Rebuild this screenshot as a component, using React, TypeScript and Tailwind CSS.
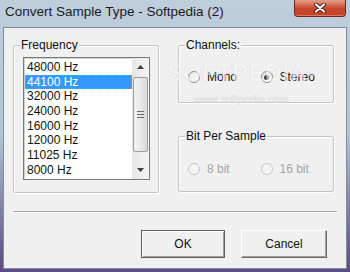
import type { ReactNode } from "react";

const rates = ["48000 Hz", "44100 Hz", "32000 Hz", "24000 Hz", "16000 Hz", "12000 Hz", "11025 Hz", "8000 Hz"];

function Group({ label, className, children }: { label: string; className: string; children?: ReactNode }) {
  return (
    <div
      className={`relative rounded-[2px] border border-[#c4c4c4] shadow-[inset_1px_1px_0_#fff,1px_1px_0_#fff] ${className}`}
    >
      <span className="absolute -top-[8px] left-[6px] bg-[#f0f0f0] px-[1px] text-[12px] leading-[14px] text-[#111]">
        {label}
      </span>
      {children}
    </div>
  );
}

function Radio({ label, checked, disabled, width }: { label: string; checked?: boolean; disabled?: boolean; width: string }) {
  return (
    <div className={`flex items-center gap-[7px] ${width}`}>
      <span
        className={`flex h-[12px] w-[12px] items-center justify-center rounded-full border ${
          disabled
            ? "border-[#c6c6c6] bg-[#f4f4f4]"
            : "border-[#8e8f8f] bg-gradient-to-br from-[#dcdcdc] via-[#f7f7f7] to-white"
        }`}
      >
        {checked && <span className="h-[5px] w-[5px] rounded-full bg-gradient-to-br from-[#555] to-[#0d0d0d]" />}
      </span>
      <span className={`text-[12px] leading-[14px] ${disabled ? "text-[#a5a5a5]" : "text-[#111]"}`}>{label}</span>
    </div>
  );
}

function Arrow({ up }: { up?: boolean }) {
  return (
    <svg width="7" height="4" viewBox="0 0 7 4">
      <path d={up ? "M3.5 0 L7 4 L0 4 Z" : "M0 0 L7 0 L3.5 4 Z"} fill="#3c3c3c" />
    </svg>
  );
}

function ListBox() {
  return (
    <div className="ml-[9px] mt-[11px] flex h-[123px] w-[127px] border border-[#7a7a7a] bg-white shadow-[inset_1px_1px_0_#d0d0d0]">
      <div className="flex-1 pl-[1px] pt-[2px]">
        {rates.map((r, i) => (
          <div
            key={r}
            className={`h-[14.7px] pl-[2px] text-[12px] leading-[14.7px] ${
              i === 1 ? "bg-[#3399ff] text-white outline-1 -outline-offset-1 outline-dotted outline-[#d4873d]" : "text-[#111]"
            }`}
          >
            {r}
          </div>
        ))}
      </div>
      <div className="flex w-[17px] flex-col bg-gradient-to-r from-[#e6e6e6] to-[#f4f4f4]">
        <div className="flex h-[17px] items-center justify-center">
          <Arrow up />
        </div>
        <div className="mx-auto mt-[2px] flex h-[75px] w-[15px] flex-col items-center justify-center gap-[2px] rounded-[2px] border border-[#9d9d9d] bg-gradient-to-r from-[#f3f3f3] via-[#e9e9e9] to-[#d8d8d8]">
          <span className="h-px w-[7px] bg-[#6b6b6b]" />
          <span className="h-px w-[7px] bg-[#6b6b6b]" />
          <span className="h-px w-[7px] bg-[#6b6b6b]" />
        </div>
        <div className="flex flex-1 items-end justify-center pb-[7px]">
          <Arrow />
        </div>
      </div>
    </div>
  );
}

export default function App() {
  return (
    <div className="relative flex h-[272px] w-[350px] flex-col overflow-hidden bg-gradient-to-b from-[#bfcedd] via-[#b2c3d4] to-[#5c4a80] font-['Liberation_Sans',Arial,sans-serif]">
      <div className="flex h-[27px] items-start justify-between">
        <span className="mt-[4px] pl-[5px] text-[13.5px] leading-[16px] text-[#1b1b1b]">
          Convert Sample Type - Softpedia (2)
        </span>
        <button className="mr-[4px] flex h-[17px] w-[52px] items-center justify-center rounded-b-[4px] border border-t-0 border-[#6a2a20] bg-gradient-to-b from-[#e3a08c] via-[#c9472f] to-[#c2432a] shadow-[inset_0_-1px_0_#e07a5c]">
          <svg width="12" height="10" viewBox="0 0 12 10">
            <path d="M2 1.5 L10 8.5 M10 1.5 L2 8.5" stroke="#3b1a14" strokeWidth="4" strokeLinecap="round" />
            <path d="M2 1.5 L10 8.5 M10 1.5 L2 8.5" stroke="#fff" strokeWidth="2.2" strokeLinecap="round" />
          </svg>
        </button>
      </div>

      <div className="relative mx-[3px] mb-[3px] flex-1 border border-[#7d8ea0] bg-[#f0f0f0]">
        <div className="flex gap-[19px] pl-[9px] pt-[17px]">
          <Group label="Frequency" className="h-[148px] w-[146px]">
            <ListBox />
          </Group>
          <div className="flex w-[156px] flex-col">
            <Group label="Channels:" className="h-[58px]">
              <div className="flex pl-[9px] pt-[24px]">
                <Radio label="Mono" width="w-[73px]" />
                <Radio label="Stereo" checked width="w-[73px]" />
              </div>
            </Group>
            <Group label="Bit Per Sample" className="mt-[33px] h-[56px]">
              <div className="flex pl-[9px] pt-[25px]">
                <Radio label="8 bit" disabled width="w-[73px]" />
                <Radio label="16 bit" disabled width="w-[73px]" />
              </div>
            </Group>
          </div>
        </div>

        <div className="mx-[9px] mt-[18px] h-[2px] border-t border-b border-t-[#a8a8a8] border-b-white" />

        <div className="mt-[17px] flex justify-end gap-[16px] pr-[19px]">
          <button className="h-[28px] w-[84px] border border-[#5f5f5f] bg-[#f0f0f0] text-[12px] text-[#111] shadow-[inset_1px_1px_0_#fff,inset_-1px_-1px_0_#a0a0a0]">
            OK
          </button>
          <button className="h-[28px] w-[86px] border border-t-white border-l-white border-r-[#696969] border-b-[#696969] bg-[#f0f0f0] text-[12px] text-[#111] shadow-[inset_-1px_-1px_0_#a0a0a0]">
            Cancel
          </button>
        </div>

        <div className="pointer-events-none absolute left-[163px] top-[33px] flex flex-col items-center opacity-60">
          <span className="text-[23px] font-bold leading-[24px] tracking-[1px] text-[#f6f6f6] [text-shadow:0_0_1px_#b8b8b8]">
            SOFTPEDIA<sup className="text-[7px] font-normal">™</sup>
          </span>
          <span className="mt-[8px] text-[11px] leading-[12px] text-[#dedede] [text-shadow:0_0_1px_#c0c0c0]">
            www.softpedia.com
          </span>
        </div>
      </div>
    </div>
  );
}
